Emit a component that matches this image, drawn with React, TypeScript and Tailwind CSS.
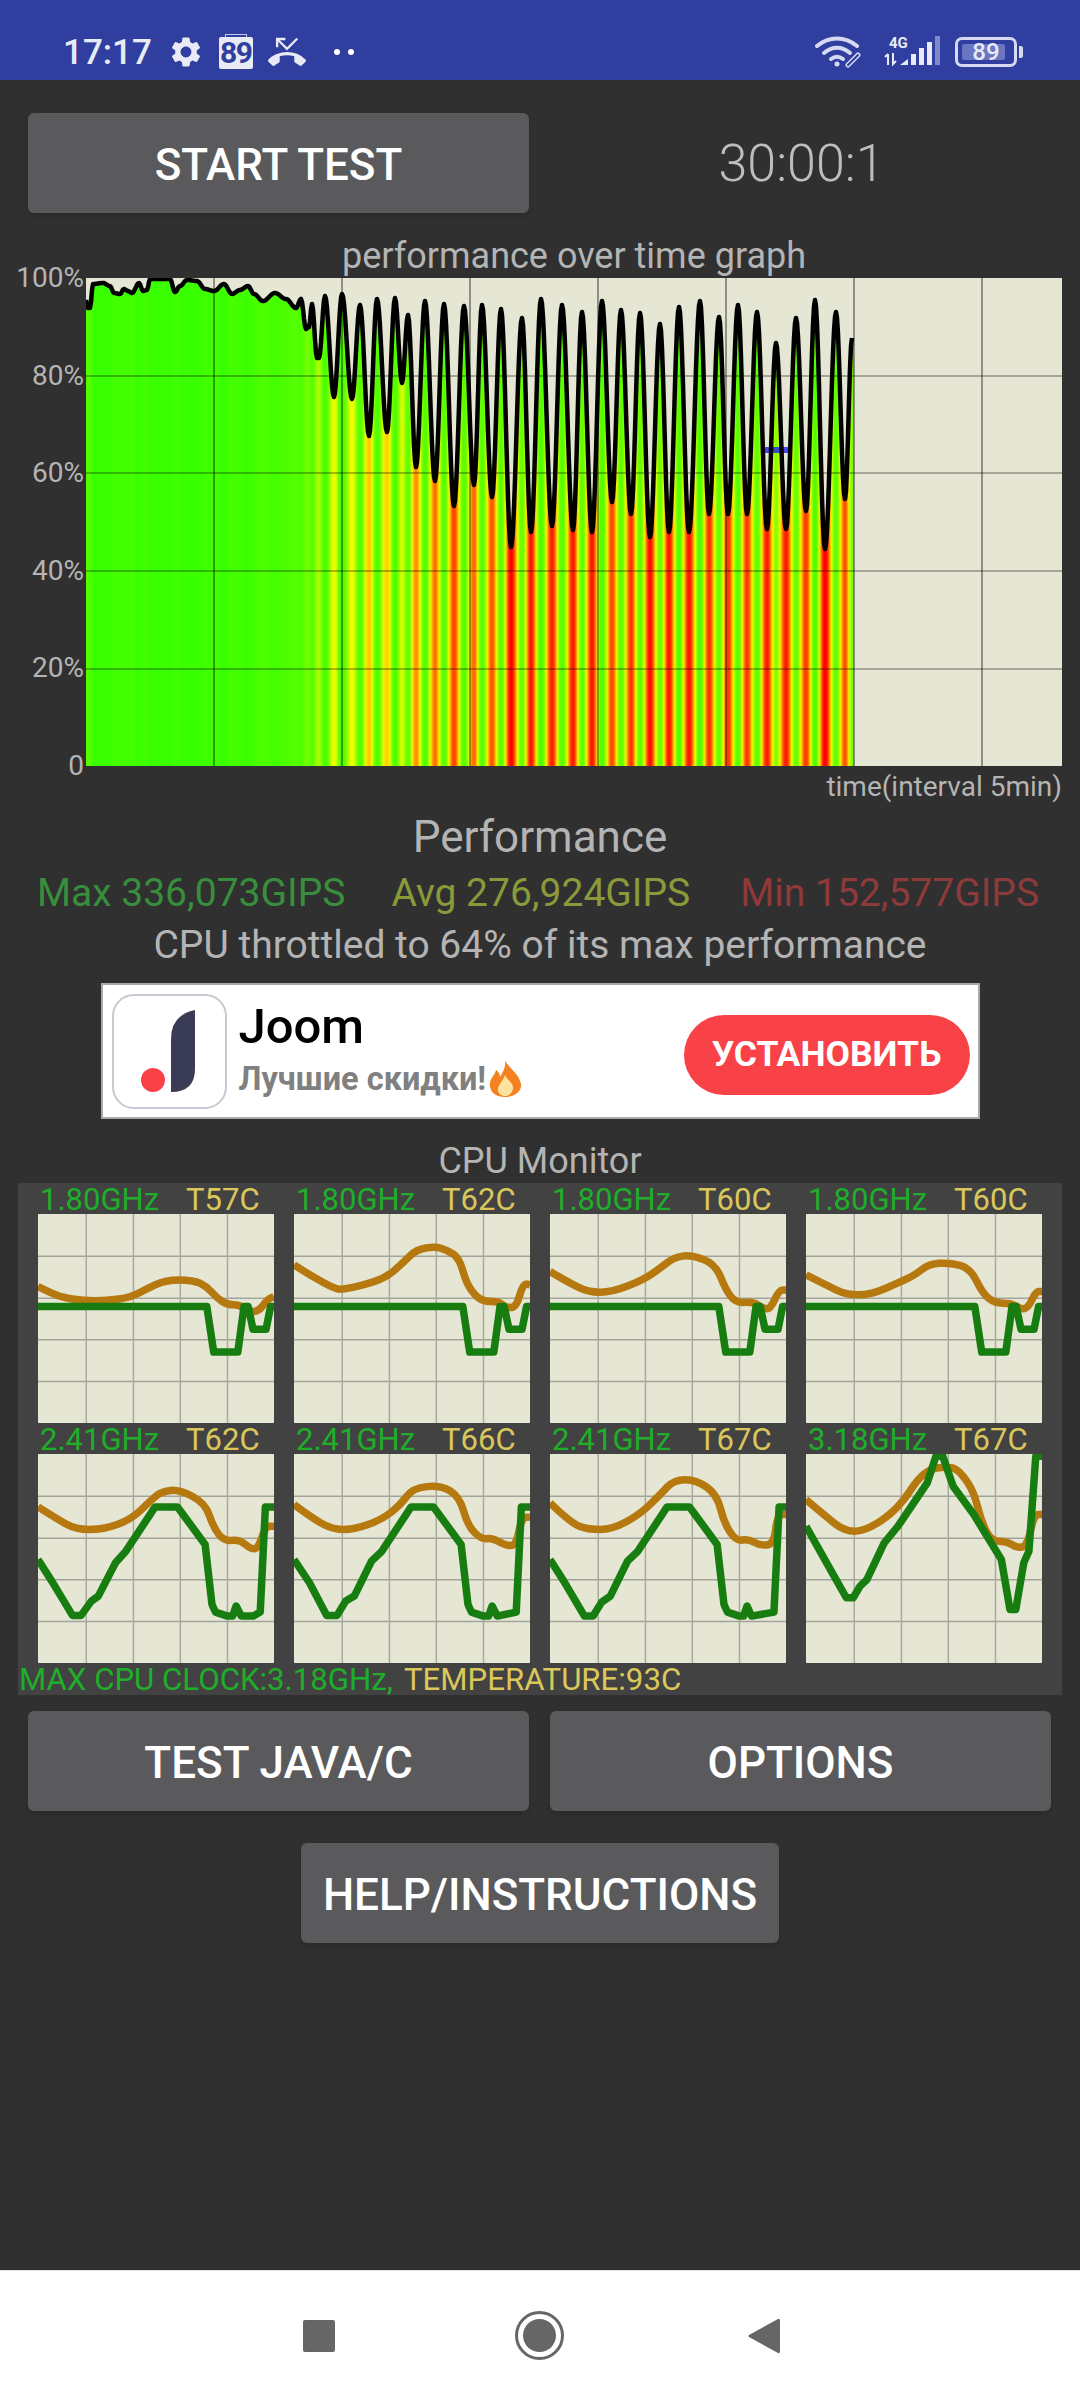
import React from 'react';
import { MdSettings, MdPhoneMissed } from 'react-icons/md';

// performance curve, in page pixels (viewBox of the chart is offset to match)
const CURVE: [number, number][] = [
  [86, 300], [88, 308], [90, 308], [93, 284], [103, 283], [110, 286], [114, 293], [120, 294], [124, 289], [128, 291], [132, 293],
  [139, 283], [143, 291], [147, 290], [150, 279], [170, 279], [175, 292], [180, 286], [187, 280], [197, 281], [205, 289], [214, 291],
  [224, 284], [232, 294], [240, 290], [248, 286], [254, 294], [263, 301], [275, 293], [286, 299], [296, 308], [301, 299], [306, 329],
  [309, 327], [312, 304], [317, 358], [319, 358], [325, 296], [334, 397], [342, 294], [352, 399], [360, 305], [369, 436], [377, 299],
  [387, 432], [395, 298], [402, 383], [408, 315], [416, 467], [425, 301], [435, 481], [444, 304], [454, 506], [464, 306], [474, 485],
  [482, 305], [492, 497], [501, 309], [511, 547], [522, 318], [531, 532], [541, 299], [552, 526], [562, 305], [573, 530], [582, 312],
  [592, 532], [602, 301], [612, 502], [621, 310], [631, 514], [640, 313], [650, 537], [660, 324], [669, 532], [679, 307], [689, 532],
  [700, 301], [709, 514], [719, 317], [728, 514], [738, 305], [747, 514], [757, 312], [767, 529], [776, 343], [786, 529], [796, 318],
  [806, 511], [815, 300], [825, 549], [836, 312], [845, 499], [852, 338],
];

// y -> colour ramp of the fill
const RAMP: [number, number, number, number][] = [
  [285, 58, 255, 0], [310, 90, 255, 0], [340, 125, 255, 0], [370, 190, 255, 0], [397, 238, 255, 0], [436, 255, 200, 0],
  [467, 255, 136, 0], [506, 255, 64, 0], [530, 255, 21, 0], [547, 255, 0, 0],
];

function rampColor(y: number) {
  if (y <= RAMP[0][0]) return `rgb(${RAMP[0][1]},${RAMP[0][2]},${RAMP[0][3]})`;
  for (let i = 1; i < RAMP.length; i++) {
    if (y <= RAMP[i][0]) {
      const a = RAMP[i - 1];
      const b = RAMP[i];
      const t = (y - a[0]) / (b[0] - a[0]);
      return `rgb(${Math.round(a[1] + (b[1] - a[1]) * t)},${Math.round(a[2] + (b[2] - a[2]) * t)},${Math.round(a[3] + (b[3] - a[3]) * t)})`;
    }
  }
  return 'rgb(255,0,0)';
}

// cosine easing gives the rounded peaks and flat valleys of the real trace
function curveAt(x: number) {
  for (let i = 1; i < CURVE.length; i++) {
    if (x <= CURVE[i][0]) {
      const [x0, y0] = CURVE[i - 1];
      const [x1, y1] = CURVE[i];
      const t = (1 - Math.cos((Math.PI * (x - x0)) / (x1 - x0))) / 2;
      return y0 + (y1 - y0) * t;
    }
  }
  return CURVE[CURVE.length - 1][1];
}

const samples = Array.from({ length: 767 }).map((_, i) => ({ x: 86 + i, y: curveAt(86 + i) }));
const curvePts = samples.map((p) => `${p.x},${p.y.toFixed(1)}`).join(' ');

const PerfChart = () => (
  <svg className="block w-[976px] h-[488px]" viewBox="86 278 976 488">
    <defs>
      <linearGradient id="perf-fill" gradientUnits="userSpaceOnUse" x1="86" y1="0" x2="852" y2="0">
        {samples.map((s, i) => (
          <stop key={i} offset={i / 766} stopColor={rampColor(s.y)} />
        ))}
      </linearGradient>
    </defs>
    <rect x="86" y="278" width="976" height="488" fill="#e6e6d4" />
    <polygon points={`86,766 ${curvePts} 854,338 854,766`} fill="url(#perf-fill)" />
    {[376, 473, 571, 669].map((y) => (
      <line key={y} x1="86" x2="1062" y1={y} y2={y} stroke="#000" strokeOpacity="0.38" strokeWidth="1.5" />
    ))}
    {[214, 342, 470, 598, 726, 854, 982].map((x) => (
      <line key={x} x1={x} x2={x} y1="278" y2="766" stroke="#000" strokeOpacity="0.5" strokeWidth="1.5" />
    ))}
    <rect x="764" y="447" width="26" height="6" fill="#2a2ae8" fillOpacity="0.85" />
    <polyline points={curvePts} fill="none" stroke="#000" strokeWidth="4.5" strokeLinejoin="round" />
  </svg>
);

// CPU graphs, viewBox 685x628 (freq = green, temp = orange)
const DIP = '0,278 490,278 510,415 580,415 598,278 610,278 624,346 662,346 675,278 685,278';

const CORES = [
  {
    ghz: '1.80GHz', temp: 'T57C', freq: DIP,
    heat: '0,218 40,238 70,250 130,261 200,261 270,250 310,228 370,198 450,198 490,218 520,253 550,273 585,273 610,293 640,293 665,258 685,248',
  },
  {
    ghz: '1.80GHz', temp: 'T62C', freq: DIP,
    heat: '0,153 45,183 120,226 145,226 195,215 265,193 315,148 355,106 410,98 445,108 480,133 500,208 530,250 555,263 595,263 615,281 645,281 665,208 685,213',
  },
  {
    ghz: '1.80GHz', temp: 'T60C', freq: DIP,
    heat: '0,173 50,203 110,235 180,235 270,198 320,163 360,130 410,123 480,150 510,228 540,268 590,263 620,285 640,285 665,228 685,228',
  },
  {
    ghz: '1.80GHz', temp: 'T60C', freq: DIP,
    heat: '0,183 57,213 117,243 187,243 277,203 317,183 357,150 417,146 477,163 512,238 547,268 597,268 627,288 647,278 667,233 685,233',
  },
  {
    ghz: '2.41GHz', temp: 'T62C',
    freq: '0,317 40,382 100,485 125,485 155,442 175,427 225,327 255,292 340,159 405,159 485,272 505,452 515,475 550,487 565,487 575,457 590,487 625,487 645,475 660,159 685,159',
    heat: '0,159 50,192 110,227 190,227 270,197 330,137 360,112 410,107 485,147 510,222 540,262 585,257 620,287 640,282 660,217 685,217',
  },
  {
    ghz: '2.41GHz', temp: 'T66C',
    freq: '0,317 45,387 95,485 125,485 150,442 175,427 225,322 255,292 340,159 405,159 485,272 505,452 515,475 550,487 565,487 575,457 590,487 645,475 660,159 685,159',
    heat: '0,152 45,187 110,227 175,227 255,197 310,152 345,102 425,94 480,127 505,217 545,257 575,252 615,275 645,275 660,192 685,189',
  },
  {
    ghz: '2.41GHz', temp: 'T67C',
    freq: '0,317 40,382 100,487 125,487 150,445 175,427 225,322 255,292 340,159 405,159 485,272 505,452 515,475 550,487 562,487 572,457 585,487 650,475 665,159 685,159',
    heat: '0,147 60,207 110,227 180,227 260,182 320,122 360,77 425,77 485,122 505,207 540,262 575,255 610,275 650,272 660,182 685,182',
  },
  {
    ghz: '3.18GHz', temp: 'T67C',
    freq: '0,217 57,322 117,432 137,432 157,397 177,377 227,267 267,217 352,87 377,7 397,7 427,97 487,182 567,317 592,467 609,467 632,327 647,292 667,7 685,7',
    heat: '0,137 57,187 112,232 172,232 267,167 342,47 417,37 447,52 487,112 507,197 537,262 582,262 612,282 642,277 662,182 685,182',
  },
];

// turn a point list into a path with rounded corners (midpoint quadratics)
function smoothPath(points: string) {
  const pts = points.split(' ').map((p) => p.split(',').map(Number));
  let d = `M${pts[0][0]} ${pts[0][1]}`;
  for (let i = 1; i < pts.length - 1; i++) {
    const mx = (pts[i][0] + pts[i + 1][0]) / 2;
    const my = (pts[i][1] + pts[i + 1][1]) / 2;
    d += ` Q${pts[i][0]} ${pts[i][1]} ${mx} ${my}`;
  }
  const last = pts[pts.length - 1];
  return `${d} L${last[0]} ${last[1]}`;
}

const CoreGraph: React.FC<{ freq: string; heat: string }> = ({ freq, heat }) => (
  <svg className="block w-full h-[209px] bg-[#e6e6d4]" viewBox="0 0 685 628" preserveAspectRatio="none">
    {[127, 253, 378, 503].map((y) => (
      <line key={y} x1="0" x2="685" y1={y} y2={y} stroke="#a3a39b" strokeWidth="1.5" vectorEffect="non-scaling-stroke" />
    ))}
    {[140, 277, 413, 550].map((x) => (
      <line key={x} x1={x} x2={x} y1="0" y2="628" stroke="#a9a9a1" strokeWidth="1.5" vectorEffect="non-scaling-stroke" />
    ))}
    <path d={smoothPath(heat)} fill="none" stroke="#b6790f" strokeWidth="7.5" vectorEffect="non-scaling-stroke" />
    <polyline points={freq} fill="none" stroke="#177d10" strokeWidth="7.5" strokeLinejoin="round" vectorEffect="non-scaling-stroke" />
  </svg>
);

const Button: React.FC<{ label: string; className?: string }> = ({ label, className = '' }) => (
  <div className={`h-[100px] pt-[3px] flex items-center justify-center bg-[#5a5a5c] rounded-[6px] shadow-md text-white text-[44px] font-medium ${className}`}>
    {label}
  </div>
);

const StatusBar = () => (
  <div className="h-[80px] bg-[#303f9f] flex items-center text-[#e8eaf6]">
    <span className="ml-[63px] mt-[24px] text-[35px] font-medium leading-none">17:17</span>
    <MdSettings className="ml-[16px] mt-[24px] text-[36px]" />
    <div className="relative ml-[15px] mt-[26px] w-[34px] h-[32px] bg-[#e8eaf6] rounded-[2px] flex items-center justify-center text-[#303f9f] text-[30px] font-bold leading-none tracking-[-1.5px]">
      89
      <div className="absolute left-[6px] top-[-3px] w-[22px] h-[3px] border border-b-0 border-[#c5cae9]" />
    </div>
    <MdPhoneMissed className="ml-[15px] mt-[24px] text-[38px]" />
    <div className="ml-[28px] mt-[24px] flex gap-[8px]">
      <div className="w-[6px] h-[6px] rounded-full bg-white" />
      <div className="w-[6px] h-[6px] rounded-full bg-white" />
    </div>
    <div className="ml-auto mr-[63px] mt-[24px] flex items-center">
      <svg width="48" height="32" viewBox="0 0 48 32" fill="none" stroke="#d5d9f2" strokeWidth="4" strokeLinecap="round">
        <path d="M2 10 C14 0 30 0 42 10" />
        <path d="M9 17 C17 10 27 10 35 17" />
        <path d="M16 23 C20 20 24 20 28 23" />
        <circle cx="22" cy="28" r="2.5" fill="#d5d9f2" stroke="none" />
        <path d="M33 29 L43 19" strokeWidth="5" stroke="#d5d9f2" />
        <path d="M33 29 L43 19" strokeWidth="2" stroke="#303f9f" />
      </svg>
      <svg className="ml-[20px] -mt-[4px]" width="60" height="36" viewBox="0 -4 60 36">
        <text x="6" y="12" fontSize="15" fontWeight="700" fill="#e8eaf6" fontFamily="Roboto, sans-serif">4G</text>
        <path d="M5 18v11M2 21l3-3M10 17v11l3-3" fill="none" stroke="#e8eaf6" strokeWidth="2" />
        <polygon points="17,29 25,23 25,29" fill="#e8eaf6" />
        <rect x="28" y="18" width="5" height="11" fill="#e8eaf6" />
        <rect x="36" y="12" width="5" height="17" fill="#e8eaf6" />
        <rect x="44" y="6" width="5" height="23" fill="#e8eaf6" />
        <rect x="52" y="0" width="5" height="29" fill="#7f89cc" />
      </svg>
      <div className="relative ml-[12px] w-[62px] h-[30px] border-[3px] border-[#d5d9f2] rounded-[7px] flex items-center justify-center">
        <div className="absolute left-[4px] top-[4px] w-[43px] h-[16px] bg-[#6a76c2] rounded-[2px]" />
        <span className="relative text-[24px] font-medium leading-none text-[#e8eaf6]">89</span>
        <div className="absolute right-[-9px] top-[6px] w-[4px] h-[12px] bg-[#d5d9f2] rounded-r-[2px]" />
      </div>
    </div>
  </div>
);

const JoomAd = () => (
  <div className="mt-[16px] mx-auto w-[879px] h-[136px] bg-white border-2 border-[#a9a9a9] flex items-center pl-[9px] pr-[8px]">
    <div className="w-[115px] h-[115px] shrink-0 border-2 border-[#c8c8d2] rounded-[22px] flex items-center justify-center">
      <svg width="60" height="90" viewBox="140 1007 60 90">
        <circle cx="154" cy="1081" r="12" fill="#f84248" />
        <path d="M196 1011 V1070 Q196 1093 172 1093 V1040 Q172 1016 196 1011 Z" fill="#3a3c56" />
      </svg>
    </div>
    <div className="ml-[12px] pb-[3px] flex flex-col">
      <span className="text-[49px] font-medium leading-[52px] text-black">Joom</span>
      <div className="flex items-center mt-[6px]">
        <span className="text-[32.5px] font-bold leading-[40px] text-[#808080]">Лучшие скидки!</span>
        <svg className="ml-[2px]" width="35" height="37" viewBox="0 0 35 37">
          <path d="M17 0 C20 8 31 13 33 24 C34 32 26 37 17 37 C8 37 1 32 2 23 C3 17 7 15 8 10 C11 12 12 14 12 17 C15 12 18 7 17 0 Z" fill="#f5811f" />
          <path d="M17 15 C19 20 26 23 25 29 C24 34 20 36 17 36 C13 36 9 33 10 28 C11 24 15 21 17 15 Z" fill="#fde3a0" />
        </svg>
      </div>
    </div>
    <div className="ml-auto mt-[8px] w-[286px] h-[80px] rounded-full bg-[#f84248] flex items-center justify-center text-white text-[35.5px] font-bold">
      УСТАНОВИТЬ
    </div>
  </div>
);

export default function App() {
  return (
    <div className="w-[1080px] h-[2400px] flex flex-col bg-[#303030] [font-family:Roboto,sans-serif] overflow-hidden">
      <StatusBar />

      <div className="flex-1 flex flex-col">
        {/* start row */}
        <div className="mt-[33px] px-[28px] flex items-center">
          <Button label="START TEST" className="w-[501px]" />
          <div className="flex-1 pl-[22px] pt-[2px] text-center text-[52px] font-light leading-none text-[#bdbdbd]">30:00:1</div>
        </div>

        {/* performance chart */}
        <div className="mt-[21px] ml-[86px] w-[976px] h-[44px] text-center text-[36px] leading-[44px] text-[#b4b4b4]">
          performance over time graph
        </div>
        <div className="flex">
          <div className="w-[86px] h-[488px]">
            <div className="h-[518px] -mt-[15px] pr-[2px] flex flex-col justify-between items-end text-[28px] leading-[30px] text-[#b4b4b4]">
              <span>100%</span>
              <span>80%</span>
              <span>60%</span>
              <span>40%</span>
              <span>20%</span>
              <span>0</span>
            </div>
          </div>
          <PerfChart />
        </div>
        <div className="w-[1062px] h-[42px] text-right text-[28px] leading-[42px] text-[#b4b4b4]">time(interval 5min)</div>

        {/* summary */}
        <div className="mt-[4px] text-center text-[44px] leading-[50px] text-[#b4b4b4]">Performance</div>
        <div className="mt-[9px] pl-[37px] flex text-[39px] leading-[44px]">
          <span className="text-[#388e3c]">Max 336,073GIPS</span>
          <span className="ml-[46px] text-[#8a9a3a]">Avg 276,924GIPS</span>
          <span className="ml-[50px] text-[#8f3a3a]">Min 152,577GIPS</span>
        </div>
        <div className="mt-[8px] text-center text-[39px] leading-[44px] text-[#b4b4b4]">CPU throttled to 64% of its max performance</div>

        <JoomAd />

        {/* cpu monitor */}
        <div className="mt-[20px] h-[44px] text-center text-[36px] leading-[44px] text-[#b4b4b4]">CPU Monitor</div>
        <div className="ml-[18px] w-[1044px] h-[512px] bg-[#424242]">
          <div className="px-[20px] grid grid-cols-4 gap-x-[20px]">
            {CORES.map((core, i) => (
              <div key={i}>
                <div className="h-[31px] pl-[2px] flex gap-[27px] text-[31px] leading-[33px]">
                  <span className="text-[#1fae2a]">{core.ghz}</span>
                  <span className="text-[#dcc85a]">{core.temp}</span>
                </div>
                <CoreGraph freq={core.freq} heat={core.heat} />
              </div>
            ))}
          </div>
          <div className="pl-[1px] h-[32px] flex text-[31.2px] leading-[34px] whitespace-nowrap">
            <span className="text-[#1fae2a]">MAX CPU CLOCK:3.18GHz,</span>
            <span className="ml-[11px] text-[#dcc85a]">TEMPERATURE:93C</span>
          </div>
        </div>

        {/* bottom buttons */}
        <div className="mt-[16px] px-[28px] flex gap-[21px]">
          <Button label="TEST JAVA/C" className="w-[501px]" />
          <Button label="OPTIONS" className="w-[501px]" />
        </div>
        <div className="mt-[32px] flex justify-center">
          <Button label="HELP/INSTRUCTIONS" className="w-[478px]" />
        </div>
      </div>

      {/* nav bar */}
      <div className="h-[130px] bg-white border-t border-[#e0e0e0] flex items-center">
        <div className="ml-[303px] w-[32px] h-[32px] rounded-[2px] bg-[#666666]" />
        <div className="ml-[180px] w-[49px] h-[49px] rounded-full border-[3px] border-[#666666] flex items-center justify-center">
          <div className="w-[33px] h-[33px] rounded-full bg-[#666666]" />
        </div>
        <svg className="ml-[184px]" width="32" height="36" viewBox="0 0 32 36">
          <path d="M30 1 Q32 0 32 3 V33 Q32 36 30 35 L1 19 Q0 18 1 17 Z" fill="#666666" />
        </svg>
      </div>
    </div>
  );
}
